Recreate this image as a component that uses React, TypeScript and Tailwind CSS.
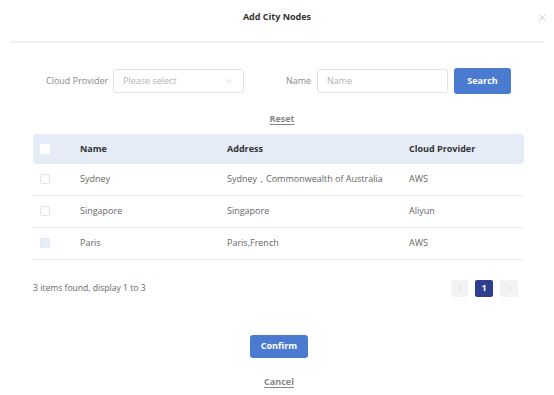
import { ChevronDown, ChevronLeft, ChevronRight, X } from 'lucide-react';

const rows = [
  { name: 'Sydney', address: 'Sydney，Commonwealth of Australia', provider: 'AWS', checked: false },
  { name: 'Singapore', address: 'Singapore', provider: 'Aliyun', checked: false },
  { name: 'Paris', address: 'Paris,French', provider: 'AWS', checked: true },
];

const Checkbox = ({ tint }: { tint?: boolean }) => (
  <span
    className={
      'block h-[10px] w-[10px] rounded-[2px] border ' +
      (tint ? 'border-[#dfe6f5] bg-[#e9eefa]' : 'border-[#e3e3e3] bg-white')
    }
  />
);

export default function App() {
  return (
    <div
      className="relative h-[395px] w-[554px] bg-white text-[9px] text-[#666]"
      style={{ fontFamily: '"Open Sans", "Noto Sans", sans-serif' }}
    >
      <header className="flex h-[41px] items-start justify-center pt-[10px]">
        <h1 className="text-[9px] font-bold text-[#333]">Add City Nodes</h1>
        <X className="absolute right-[6px] top-[12px] h-[11px] w-[11px] text-[#aaa]" strokeWidth={1.3} />
      </header>
      <div className="mx-[10px] h-[2px] bg-[#f1f1f1]" />

      <div className="mt-[25px] flex items-center pl-[46px]">
        <span className="w-[67px] text-[#888]">Cloud Provider</span>
        <div className="flex h-[24px] w-[131px] items-center justify-between rounded-[3px] border border-[#e2e2e2] px-[9px] text-[#b4b4b4]">
          <span>Please select</span>
          <ChevronDown className="h-[10px] w-[10px] text-[#bbb]" strokeWidth={1.5} />
        </div>
        <span className="ml-[42px] w-[31px] text-[#888]">Name</span>
        <div className="flex h-[24px] w-[131px] items-center rounded-[3px] border border-[#e2e2e2] px-[9px] text-[#b4b4b4]">
          Name
        </div>
        <button className="ml-[6px] h-[26px] w-[57px] rounded-[3px] bg-[#4a7bd0] text-[9px] font-bold text-white">
          Search
        </button>
      </div>

      <div className="mt-[18px] flex justify-center">
        <span className="pl-[10px] font-bold text-[#888] underline underline-offset-2">Reset</span>
      </div>

      <div className="mx-[33px] mt-[8px] w-[491px]">
        <div className="grid h-[30px] grid-cols-[47px_147px_182px_1fr] items-center rounded-[4px] bg-[#e6ecf7] font-bold text-[#333]">
          <span className="pl-[7px]">
            <span className="block h-[10px] w-[10px] rounded-[1px] bg-white" />
          </span>
          <span>Name</span>
          <span>Address</span>
          <span>Cloud Provider</span>
        </div>
        {rows.map((row) => (
          <div
            key={row.name}
            className="grid h-[32px] grid-cols-[47px_147px_182px_1fr] items-center border-b border-[#eeeeee]"
          >
            <span className="pl-[7px]">
              <Checkbox tint={row.checked} />
            </span>
            <span>{row.name}</span>
            <span>{row.address}</span>
            <span>{row.provider}</span>
          </div>
        ))}
      </div>

      <div className="mx-[33px] mt-[20px] flex items-center justify-between pr-[3px]">
        <span className="text-[8.6px]">3 items found, display 1 to 3</span>
        <div className="flex items-center gap-[7px]">
          <span className="flex h-[17px] w-[17px] items-center justify-center rounded-[2px] bg-[#f3f3f3] text-[#c8c8c8]">
            <ChevronLeft className="h-[9px] w-[9px]" strokeWidth={1.5} />
          </span>
          <span className="flex h-[17px] w-[18px] items-center justify-center rounded-[2px] bg-[#2f3f8f] font-bold text-white">
            1
          </span>
          <span className="flex h-[17px] w-[18px] items-center justify-center rounded-[2px] bg-[#f3f3f3] text-[#c8c8c8]">
            <ChevronRight className="h-[9px] w-[9px]" strokeWidth={1.5} />
          </span>
        </div>
      </div>

      <div className="mt-[38px] flex flex-col items-center pl-[4px]">
        <button className="h-[23px] w-[58px] rounded-[3px] bg-[#4a7bd0] text-[9px] font-bold text-white">
          Confirm
        </button>
        <span className="mt-[17px] font-bold text-[#888] underline underline-offset-2">Cancel</span>
      </div>
    </div>
  );
}
